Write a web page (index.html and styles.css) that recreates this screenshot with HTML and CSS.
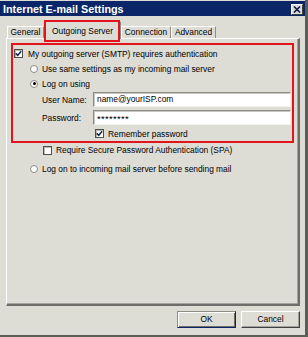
FILE: index.html
```html
<!DOCTYPE html>
<html lang="en">
<head>
    <meta charset="UTF-8">
    <meta name="viewport" content="width=device-width, initial-scale=1.0">
    <title>Internet E-mail Settings</title>
    <link rel="stylesheet" href="styles.css">
</head>
<body>
    <div class="window">
        <div class="titlebar">
            <span class="title">Internet E-mail Settings</span>
            <span class="close">
                <svg width="8" height="7" viewBox="0 0 8 7"><path d="M1 0.5 L7 6.5 M7 0.5 L1 6.5" stroke="#0a1a4a" stroke-width="1.6" fill="none"/></svg>
            </span>
        </div>
        <div class="tabs">
            <span class="tab tab-general">General</span>
            <span class="tab tab-outgoing active">Outgoing Server</span>
            <span class="tab tab-connection">Connection</span>
            <span class="tab tab-advanced">Advanced</span>
        </div>
        <div class="panel">
            <div class="auth-box">
                <div class="row first">
                    <span class="check">
                        <svg width="7" height="7" viewBox="0 0 7 7"><path d="M0.8 3.4 L2.7 5.3 L6.2 1.2" stroke="#1b2448" stroke-width="1.5" fill="none"/></svg>
                    </span>
                    My outgoing server (SMTP) requires authentication
                </div>
                <div class="row indent"><span class="radio"></span>Use same settings as my incoming mail server</div>
                <div class="row indent"><span class="radio on"></span>Log on using</div>
                <div class="field user">
                    <label>User Name:</label>
                    <span class="input">name@yourISP.com</span>
                </div>
                <div class="field pass">
                    <label>Password:</label>
                    <span class="input secret">********</span>
                </div>
                <div class="row remember">
                    <span class="check">
                        <svg width="7" height="7" viewBox="0 0 7 7"><path d="M0.8 3.4 L2.7 5.3 L6.2 1.2" stroke="#1b2448" stroke-width="1.5" fill="none"/></svg>
                    </span>
                    Remember password
                </div>
            </div>
            <div class="row spa"><span class="check"></span>Require Secure Password Authentication (SPA)</div>
            <div class="row before-send"><span class="radio"></span>Log on to incoming mail server before sending mail</div>
        </div>
        <div class="buttons">
            <span class="btn default">OK</span>
            <span class="btn">Cancel</span>
        </div>
    </div>
</body>
</html>
```

FILE: styles.css
```css
*{
    box-sizing: border-box;
    margin: 0;
    padding: 0;
}
body{
    background-color: #dddcd5;
    font-family: "Liberation Sans", Arial, sans-serif;
    font-size: 8.4px;
    color: #000;
}
.window{
    width: 308px;
    height: 337px;
    padding-top: 1px;
    background-color: #dddcd5;
    border-right: 3px solid #5c5c58;
    border-bottom: 2px solid #5c5c58;
}
.titlebar{
    height: 15px;
    background-color: #0a2669;
    display: flex;
    align-items: center;
    justify-content: space-between;
    padding: 0 2px 0 3px;
}
.title{
    color: #fff;
    font-weight: 700;
    font-size: 10.8px;
}
.close{
    width: 12px;
    height: 11px;
    margin-top: 2px;
    background-color: #dddcd5;
    border: 1px solid;
    border-color: #fff #404040 #404040 #fff;
    display: flex;
    justify-content: center;
    align-items: center;
}

/* tabs */
.tabs{
    display: flex;
    align-items: flex-end;
    height: 22px;
    padding-left: 7px;
    position: relative;
    z-index: 1;
}
.tab{
    height: 12px;
    line-height: 11px;
    text-align: center;
    border-top: 1px solid #fff;
    border-left: 1px solid #fff;
    border-right: 1px solid #8d8c87;
}
.tab-general{ width: 37px; }
.tab-outgoing{ width: 77px; }
.tab-connection{ width: 50px; }
.tab-advanced{ width: 45px; }
.tab.active{
    position: relative;
    height: 18px;
    line-height: 17px;
    padding-top: 1px;
    margin-bottom: -1px;
    background-color: #dddcd5;
}
.tab.active::after{
    content: "";
    position: absolute;
    left: -1px;
    right: 0;
    top: -2px;
    bottom: -3px;
    border: 2px solid #e3141b;
}

/* panel */
.panel{
    margin: 0 5px 0 6px;
    height: 268px;
    padding: 4px;
    border-top: 1px solid #fff;
    border-left: 1px solid #fff;
    border-right: 2px solid #6f6e6a;
    border-bottom: 2px solid #6f6e6a;
    box-shadow: inset -1px -1px 0 #a3a29c;
}
.auth-box{
    border: 2px solid #e3141b;
    padding-top: 1px;
    height: 100px;
}
.row{
    display: flex;
    align-items: center;
    height: 15px;
    white-space: nowrap;
}
.first{ padding-left: 1px; }
.indent{ padding-left: 17px; }
.remember{
    margin-top: 1px;
    padding-left: 82px;
}
.spa{
    height: 14px;
    padding-left: 32px;
}
.before-send{
    height: 14px;
    margin-top: 5px;
    padding-left: 19px;
}
.check{
    width: 9px;
    height: 9px;
    margin-right: 5px;
    background-color: #fff;
    border: 1px solid #4e4e4a;
    box-shadow: inset 1px 1px 0 #b9b8b2;
    display: flex;
    justify-content: center;
    align-items: center;
    flex-shrink: 0;
}
.spa .check{ margin-right: 4px; }
.remember .check{ margin-right: 4px; }
.radio{
    width: 8px;
    height: 8px;
    margin-right: 4px;
    border-radius: 50%;
    background-color: #fff;
    border: 1px solid #8a8984;
    position: relative;
    flex-shrink: 0;
}
.radio.on::after{
    content: "";
    position: absolute;
    left: 1.5px;
    top: 1.5px;
    width: 3px;
    height: 3px;
    border-radius: 50%;
    background-color: #000;
}
.field{
    display: flex;
    align-items: center;
    height: 15px;
    padding-left: 29px;
}
.user{ margin-top: 1px; }
.pass{ margin-top: 3px; }
.field label{
    width: 51px;
}
.input{
    width: 198px;
    height: 15px;
    line-height: 13px;
    padding-left: 3px;
    background-color: #fff;
    border: 1px solid;
    border-color: #8c8b86 #f2f2ee #f2f2ee #8c8b86;
    box-shadow: inset 1px 1px 0 #c8c7c1;
}
.secret{
    font-size: 9.5px;
    line-height: 15px;
    letter-spacing: 0.3px;
}

/* buttons */
.buttons{
    display: flex;
    justify-content: flex-end;
    gap: 5px;
    margin-top: 5px;
    padding-right: 5px;
}
.btn{
    width: 59px;
    height: 17px;
    line-height: 15px;
    text-align: center;
    border: 1px solid;
    border-color: #fff #404040 #404040 #fff;
    box-shadow: inset -1px -1px 0 #a3a29c;
}
.btn.default{
    border-color: #8d8c87 #0a2669 #0a2669 #8d8c87;
    box-shadow: inset 1px 1px 0 #fff, inset -1px -1px 0 #6f6e6a;
}
```
